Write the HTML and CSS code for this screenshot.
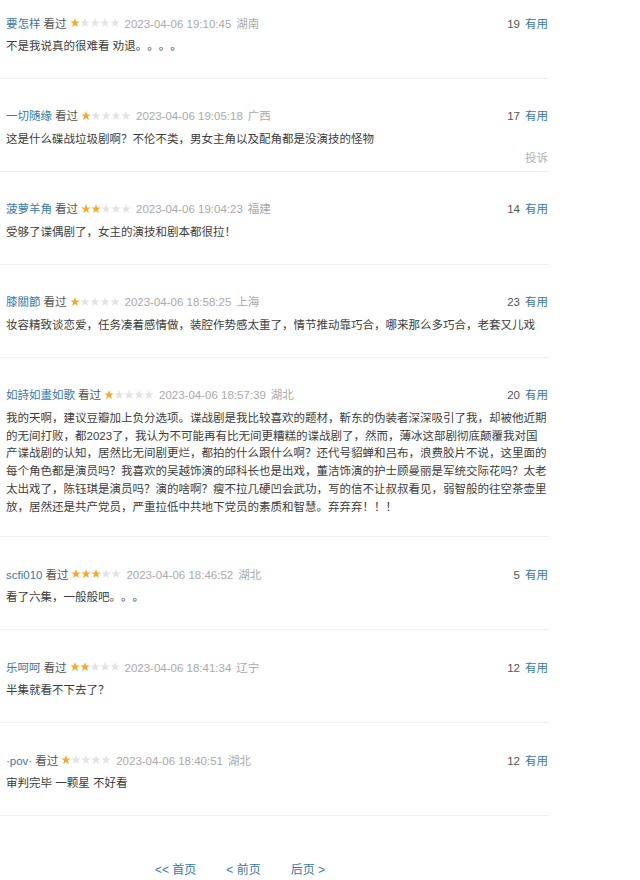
FILE: index.html
```html
<!DOCTYPE html>
<html lang="zh-CN">
<head>
<meta charset="utf-8">
<title>短评</title>
<link rel="stylesheet" href="styles.css">
</head>
<body>
<svg width="0" height="0" class="defs" aria-hidden="true">
  <defs>
    <polygon id="star" points="5,0 6.18,3.38 9.76,3.45 6.9,5.62 7.94,9.05 5,7 2.06,9.05 3.1,5.62 0.24,3.45 3.82,3.38"/>
  </defs>
</svg>
<div class="list">
  <div class="comment">
    <div class="head">
      <div class="info"><a class="name">要怎样</a><span class="watched">看过</span>
        <svg class="stars" width="50" height="10" viewBox="0 0 50 10"><use href="#star" class="on"/><use href="#star" x="10" class="off"/><use href="#star" x="20" class="off"/><use href="#star" x="30" class="off"/><use href="#star" x="40" class="off"/></svg>
        <span class="time">2023-04-06 19:10:45</span><span class="loc">湖南</span></div>
      <div class="votes"><span class="count">19</span><a class="useful">有用</a></div>
    </div>
    <p class="text">不是我说真的很难看 劝退。。。。</p>
    <div class="foot"><span class="report">投诉</span></div>
  </div>

  <div class="comment">
    <div class="head">
      <div class="info"><a class="name">一切随缘</a><span class="watched">看过</span>
        <svg class="stars" width="50" height="10" viewBox="0 0 50 10"><use href="#star" class="on"/><use href="#star" x="10" class="off"/><use href="#star" x="20" class="off"/><use href="#star" x="30" class="off"/><use href="#star" x="40" class="off"/></svg>
        <span class="time">2023-04-06 19:05:18</span><span class="loc">广西</span></div>
      <div class="votes"><span class="count">17</span><a class="useful">有用</a></div>
    </div>
    <p class="text">这是什么碟战垃圾剧啊？不伦不类，男女主角以及配角都是没演技的怪物</p>
    <div class="foot"><span class="report shown">投诉</span></div>
  </div>

  <div class="comment">
    <div class="head">
      <div class="info"><a class="name">菠萝羊角</a><span class="watched">看过</span>
        <svg class="stars" width="50" height="10" viewBox="0 0 50 10"><use href="#star" class="on"/><use href="#star" x="10" class="on"/><use href="#star" x="20" class="off"/><use href="#star" x="30" class="off"/><use href="#star" x="40" class="off"/></svg>
        <span class="time">2023-04-06 19:04:23</span><span class="loc">福建</span></div>
      <div class="votes"><span class="count">14</span><a class="useful">有用</a></div>
    </div>
    <p class="text">受够了谍偶剧了，女主的演技和剧本都很拉！</p>
    <div class="foot"><span class="report">投诉</span></div>
  </div>

  <div class="comment">
    <div class="head">
      <div class="info"><a class="name">膝關節</a><span class="watched">看过</span>
        <svg class="stars" width="50" height="10" viewBox="0 0 50 10"><use href="#star" class="on"/><use href="#star" x="10" class="off"/><use href="#star" x="20" class="off"/><use href="#star" x="30" class="off"/><use href="#star" x="40" class="off"/></svg>
        <span class="time">2023-04-06 18:58:25</span><span class="loc">上海</span></div>
      <div class="votes"><span class="count">23</span><a class="useful">有用</a></div>
    </div>
    <p class="text">妆容精致谈恋爱，任务凑着感情做，装腔作势感太重了，情节推动靠巧合，哪来那么多巧合，老套又儿戏</p>
    <div class="foot"><span class="report">投诉</span></div>
  </div>

  <div class="comment">
    <div class="head">
      <div class="info"><a class="name">如詩如畫如歌</a><span class="watched">看过</span>
        <svg class="stars" width="50" height="10" viewBox="0 0 50 10"><use href="#star" class="on"/><use href="#star" x="10" class="off"/><use href="#star" x="20" class="off"/><use href="#star" x="30" class="off"/><use href="#star" x="40" class="off"/></svg>
        <span class="time">2023-04-06 18:57:39</span><span class="loc">湖北</span></div>
      <div class="votes"><span class="count">20</span><a class="useful">有用</a></div>
    </div>
    <p class="text">我的天啊，建议豆瓣加上负分选项。谍战剧是我比较喜欢的题材，靳东的伪装者深深吸引了我，却被他近期的无间打败，都2023了，我认为不可能再有比无间更糟糕的谍战剧了，然而，薄冰这部剧彻底颠覆我对国产谍战剧的认知，居然比无间剧更烂，都拍的什么跟什么啊？还代号貂蝉和吕布，浪费胶片不说，这里面的每个角色都是演员吗？我喜欢的吴越饰演的邱科长也是出戏，董洁饰演的护士顾曼丽是军统交际花吗？太老太出戏了，陈钰琪是演员吗？演的啥啊？瘦不拉几硬凹会武功，写的信不让叔叔看见，弱智般的往空茶壶里放，居然还是共产党员，严重拉低中共地下党员的素质和智慧。弃弃弃！！！</p>
    <div class="foot short"><span class="report">投诉</span></div>
  </div>

  <div class="comment">
    <div class="head">
      <div class="info"><a class="name">scfi010</a><span class="watched">看过</span>
        <svg class="stars" width="50" height="10" viewBox="0 0 50 10"><use href="#star" class="on"/><use href="#star" x="10" class="on"/><use href="#star" x="20" class="on"/><use href="#star" x="30" class="off"/><use href="#star" x="40" class="off"/></svg>
        <span class="time">2023-04-06 18:46:52</span><span class="loc">湖北</span></div>
      <div class="votes"><span class="count">5</span><a class="useful">有用</a></div>
    </div>
    <p class="text">看了六集，一般般吧。。。</p>
    <div class="foot"><span class="report">投诉</span></div>
  </div>

  <div class="comment">
    <div class="head">
      <div class="info"><a class="name">乐呵呵</a><span class="watched">看过</span>
        <svg class="stars" width="50" height="10" viewBox="0 0 50 10"><use href="#star" class="on"/><use href="#star" x="10" class="on"/><use href="#star" x="20" class="off"/><use href="#star" x="30" class="off"/><use href="#star" x="40" class="off"/></svg>
        <span class="time">2023-04-06 18:41:34</span><span class="loc">辽宁</span></div>
      <div class="votes"><span class="count">12</span><a class="useful">有用</a></div>
    </div>
    <p class="text">半集就看不下去了？</p>
    <div class="foot"><span class="report">投诉</span></div>
  </div>

  <div class="comment">
    <div class="head">
      <div class="info"><a class="name">·pov·</a><span class="watched">看过</span>
        <svg class="stars" width="50" height="10" viewBox="0 0 50 10"><use href="#star" class="on"/><use href="#star" x="10" class="off"/><use href="#star" x="20" class="off"/><use href="#star" x="30" class="off"/><use href="#star" x="40" class="off"/></svg>
        <span class="time">2023-04-06 18:40:51</span><span class="loc">湖北</span></div>
      <div class="votes"><span class="count">12</span><a class="useful">有用</a></div>
    </div>
    <p class="text">审判完毕 一颗星 不好看</p>
    <div class="foot"><span class="report">投诉</span></div>
  </div>
</div>

<div class="paginator">
  <a class="page">&lt;&lt; 首页</a>
  <a class="page">&lt; 前页</a>
  <a class="page">后页 &gt;</a>
</div>
<div class="bottom-bar"></div>
</body>
</html>
```

FILE: styles.css
```css
html, body {
  margin: 0;
  padding: 0;
  background: #fff;
}

body {
  width: 640px;
  height: 880px;
  overflow: hidden;
  font-family: "Liberation Sans", "Noto Sans CJK SC", sans-serif;
  font-size: 11.5px;
  color: #494949;
  display: flex;
  flex-direction: column;
  text-spacing-trim: space-all;
}

.defs {
  position: absolute;
  width: 0;
  height: 0;
}

.list {
  width: 549px;
}

.comment {
  box-sizing: border-box;
  width: 549px;
  padding: 27.5px 1px 3.8px 6px;
  border-bottom: 1px solid #efefef;
}

.comment:first-child {
  padding-top: 13.5px;
}

.head {
  display: flex;
  justify-content: space-between;
  align-items: center;
  height: 20px;
  line-height: 20px;
}

.info {
  display: flex;
  align-items: center;
  white-space: nowrap;
}

.name {
  color: #3a78ad;
  margin-right: 3px;
}

.watched {
  color: #555;
  margin-right: 3px;
}

.stars {
  display: block;
  margin-right: 5px;
  margin-top: -1px;
}

.stars .on {
  fill: #f7a92e;
}

.stars .off {
  fill: #e3e3e3;
}

.time {
  color: #aaa;
  margin-right: 5px;
}

.loc {
  color: #aaa;
}

.votes {
  white-space: nowrap;
}

.count {
  color: #555;
  margin-right: 5px;
}

.useful {
  color: #3a78ad;
}

.text {
  margin: 4.6px 0 0;
  line-height: 17.7px;
  color: #3d3d3d;
  word-break: break-all;
  text-spacing-trim: space-all;
}

.foot {
  height: 18.4px;
  line-height: 18.4px;
  text-align: right;
}

.foot.short {
  height: 16px;
}

.report {
  color: #b3b3b3;
  visibility: hidden;
}

.report.shown {
  visibility: visible;
}

.paginator {
  display: flex;
  gap: 30px;
  padding-left: 155px;
  margin-top: 43.5px;
  height: 20px;
  line-height: 20px;
  font-size: 12px;
}

.page {
  color: #3a78ad;
}

.bottom-bar {
  margin-top: auto;
  height: 2px;
  background: #d6d6d6;
}
```
